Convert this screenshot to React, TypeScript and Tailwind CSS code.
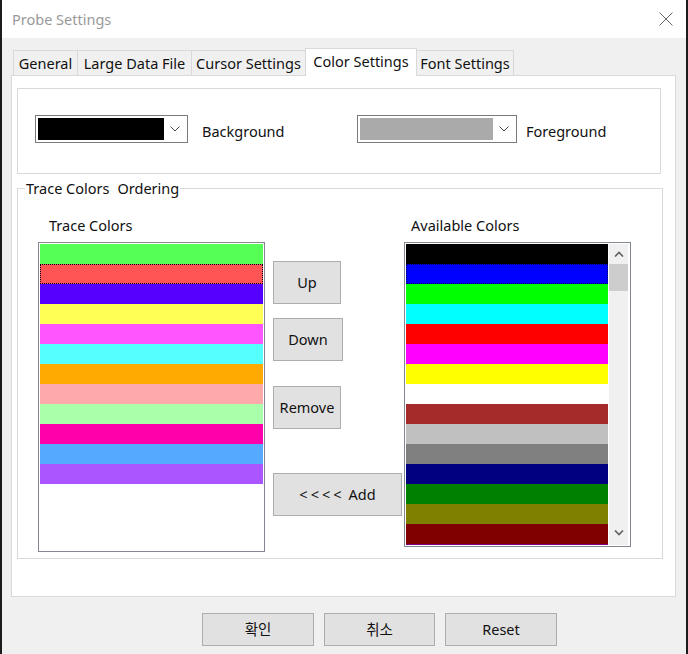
import React from "react";

const traceColors = [
  "#55ff55", "#ff5555", "#5500ff", "#ffff55", "#ff55ff", "#55ffff",
  "#ffaa00", "#ffaaaa", "#aaffaa", "#ff00aa", "#55aaff", "#aa55ff",
];
const availColors = [
  "#000000", "#0000ff", "#00ff00", "#00ffff", "#ff0000", "#ff00ff",
  "#ffff00", "#ffffff", "#a52a2a", "#c0c0c0", "#808080", "#000080",
  "#008000", "#808000", "#800000", "#800080",
];

const font = "font-['Noto_Sans','Noto_Sans_CJK_KR',sans-serif]";

function Chevron() {
  return (
    <svg width="10" height="6" viewBox="0 0 10 6" className="shrink-0">
      <path d="M0.5 0.5 L5 5 L9.5 0.5" fill="none" stroke="#444" strokeWidth="1" />
    </svg>
  );
}

function Combo({ color, w, sw }: { color: string; w: string; sw: string }) {
  return (
    <div className={`${w} h-[28px] border border-[#7a7a7a] bg-white flex items-center p-[2px]`}>
      <div className={`${sw} h-[22px]`} style={{ backgroundColor: color }} />
      <div className="flex-1 flex justify-center">
        <Chevron />
      </div>
    </div>
  );
}

function Btn({ children, cls }: { children: React.ReactNode; cls: string }) {
  return (
    <div
      className={`${cls} h-[43px] bg-[#e1e1e1] border border-[#adadad] flex items-center justify-center text-[14.5px] text-[#111]`}
    >
      {children}
    </div>
  );
}

export default function App() {
  return (
    <div
      className={`${font} w-[688px] h-[654px] bg-[#f0f0f0] border-l-2 border-r-2 border-[#1c1c1c] flex flex-col overflow-hidden`}
    >
      {/* title bar */}
      <div className="h-[38px] bg-white flex items-center justify-between pl-[10px] pr-[13px] shrink-0">
        <span className="text-[14.5px] text-[#9a9a9a] pt-[2px]">Probe Settings</span>
        <svg width="14" height="14" viewBox="0 0 14 14">
          <path d="M0.5 0.5 L13.5 13.5 M13.5 0.5 L0.5 13.5" stroke="#666" strokeWidth="1" />
        </svg>
      </div>

      {/* tabs */}
      <div className="flex items-end h-[27px] mt-[10px] ml-[11px] text-[14.5px] text-[#111]">
        <div className="w-[64px] h-[25px] border-t border-l border-[#d9d9d9] flex items-center justify-center pt-[2px]">
          General
        </div>
        <div className="w-[114px] h-[25px] border-t border-l border-[#d9d9d9] flex items-center justify-center pt-[2px]">
          Large Data File
        </div>
        <div className="w-[114px] h-[25px] border-t border-l border-[#d9d9d9] flex items-center justify-center pt-[2px]">
          Cursor Settings
        </div>
        <div className="relative z-10 w-[112px] h-[28px] -mb-px bg-white border-t border-l border-r border-[#d9d9d9] flex items-start justify-center pt-[2px]">
          Color Settings
        </div>
        <div className="w-[97px] h-[25px] border-t border-r border-[#d9d9d9] flex items-center justify-center pt-[2px]">
          Font Settings
        </div>
      </div>

      {/* panel */}
      <div className="ml-[9px] w-[665px] h-[522px] bg-white border border-[#d9d9d9] flex flex-col">
        {/* color row */}
        <div className="mt-[12px] ml-[5px] w-[644px] h-[86px] border border-[#d9d9d9] flex items-start pt-[26px] pl-[17px] text-[14.5px] text-[#111]">
          <Combo color="#000000" w="w-[153px]" sw="w-[126px]" />
          <div className="w-[169px] pl-[14px] h-[28px] flex items-center pt-[6px]">Background</div>
          <Combo color="#aaaaaa" w="w-[160px]" sw="w-[133px]" />
          <div className="pl-[9px] h-[28px] flex items-center pt-[6px]">Foreground</div>
        </div>

        {/* trace group */}
        <fieldset className="mt-[4px] ml-[5px] w-[646px] h-[381px] border border-[#d9d9d9] flex pb-[6px]">
          <legend className="ml-[7px] px-[1px] text-[14.5px] leading-[20px] text-[#111] whitespace-pre">
            Trace Colors<span className="pl-[8px]">Ordering</span>
          </legend>
          <div className="flex pt-[18px] text-[14.5px] text-[#111]">
            {/* left column */}
            <div className="ml-[20px] w-[227px] flex flex-col">
              <div className="pl-[11px] h-[20px] leading-[18px]">Trace Colors</div>
              <div className="mt-[6px] h-[310px] border border-[#828790] bg-white p-px flex flex-col">
                {traceColors.map((c, i) => (
                  <div
                    key={i}
                    className={`h-[20px] shrink-0 ${i === 1 ? "border border-dotted border-black" : ""}`}
                    style={{ backgroundColor: c }}
                  />
                ))}
              </div>
            </div>

            {/* buttons */}
            <div className="ml-[8px] w-[129px] flex flex-col mt-[45px]">
              <Btn cls="w-[68px]">Up</Btn>
              <div className="mt-[14px]">
                <Btn cls="w-[70px]">Down</Btn>
              </div>
              <div className="mt-[25px]">
                <Btn cls="w-[68px]">Remove</Btn>
              </div>
              <div className="mt-[44px]">
                <Btn cls="w-[129px]">
                  <span className="tracking-[3px]">&lt;&lt;&lt;&lt;</span>
                  <span className="pl-[4px]">Add</span>
                </Btn>
              </div>
            </div>

            {/* right column */}
            <div className="ml-[2px] w-[227px] flex flex-col">
              <div className="pl-[7px] h-[20px] leading-[18px]">Available Colors</div>
              <div className="mt-[6px] h-[305px] border border-[#828790] bg-white p-px flex overflow-hidden">
                <div className="w-[202px] flex flex-col overflow-hidden">
                  {availColors.map((c, i) => (
                    <div
                      key={i}
                      className={`h-[20px] shrink-0 ${i === 1 ? "border border-dotted border-[#000066]" : ""}`}
                      style={{ backgroundColor: c }}
                    />
                  ))}
                </div>
                <div className="ml-px w-[19px] bg-[#f0f0f0] flex flex-col">
                  <div className="h-[20px] flex items-center justify-center">
                    <svg width="10" height="6" viewBox="0 0 10 6">
                      <path d="M1 5.5 L5 1.5 L9 5.5" fill="none" stroke="#606060" strokeWidth="1.6" />
                    </svg>
                  </div>
                  <div className="h-[27px] bg-[#cdcdcd]" />
                  <div className="flex-1" />
                  <div className="h-[20px] flex items-center justify-center mb-[2px]">
                    <svg width="10" height="6" viewBox="0 0 10 6">
                      <path d="M1 0.5 L5 4.5 L9 0.5" fill="none" stroke="#606060" strokeWidth="1.6" />
                    </svg>
                  </div>
                </div>
              </div>
            </div>
          </div>
        </fieldset>
      </div>

      {/* bottom buttons */}
      <div className="mt-[16px] ml-[200px] flex gap-[10px] text-[14.5px] text-[#111]">
        <div className="w-[112px] h-[33px] bg-[#e1e1e1] border border-[#adadad] flex items-center justify-center">
          확인
        </div>
        <div className="w-[111px] h-[33px] bg-[#e1e1e1] border border-[#adadad] flex items-center justify-center">
          취소
        </div>
        <div className="w-[112px] h-[33px] bg-[#e1e1e1] border border-[#adadad] flex items-center justify-center">
          Reset
        </div>
      </div>
    </div>
  );
}
